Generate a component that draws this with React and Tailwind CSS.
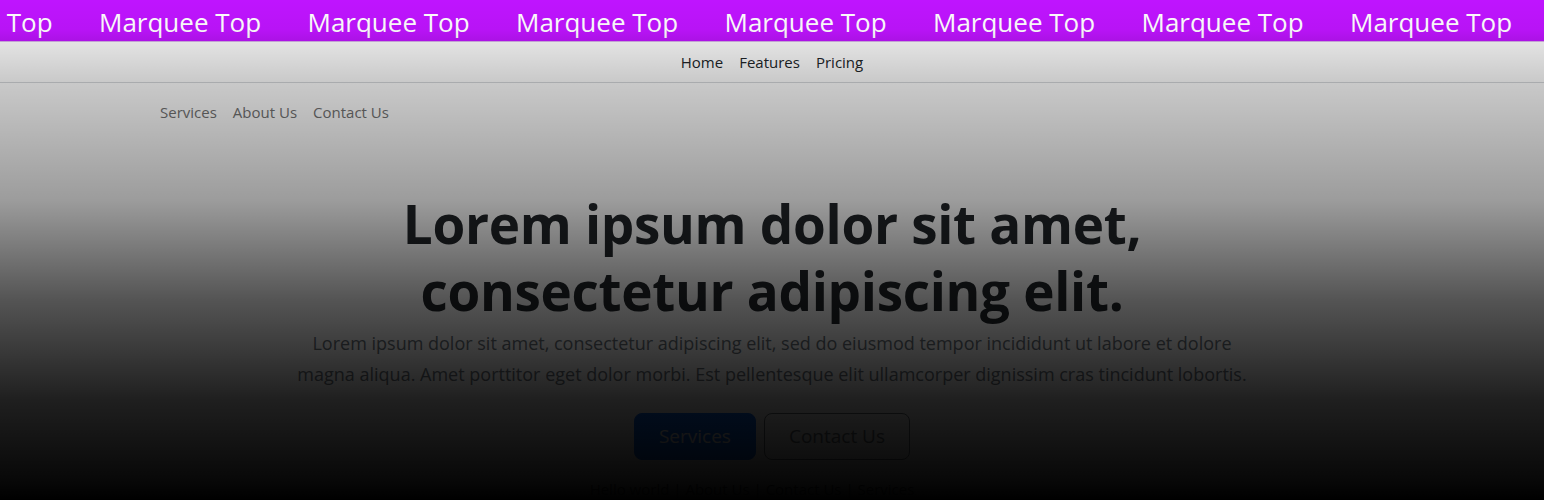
import React from "react";

const items = Array.from({ length: 9 });

export default function App() {
  return (
    <div className="relative h-[500px] overflow-hidden bg-white font-['Open_Sans',sans-serif]">
      {/* marquee */}
      <div className="h-[42px] overflow-hidden whitespace-nowrap bg-[#bf14ff] border-b border-[#d9b3ec]">
        <div className="flex ml-[-109.5px] h-full items-center pt-[3px]">
          {items.map((_, i) => (
            <span key={i} className="shrink-0 w-[208.5px] text-[26px] leading-[38px] text-white">
              Marquee Top
            </span>
          ))}
        </div>
      </div>

      {/* top nav */}
      <nav className="h-[41px] border-b border-[#d6d9dc] bg-white flex items-center justify-center">
        <a className="px-2 text-[15px] leading-6 text-[#212529]">Home</a>
        <a className="px-2 text-[15px] leading-6 text-[#212529]">Features</a>
        <a className="px-2 text-[15px] leading-6 text-[#212529]">Pricing</a>
      </nav>

      {/* sub nav */}
      <div className="pt-[9px] pl-[152px] flex">
        <a className="px-2 py-2 text-[15px] leading-6 text-[#737373]">Services</a>
        <a className="px-2 py-2 text-[15px] leading-6 text-[#737373]">About Us</a>
        <a className="px-2 py-2 text-[15px] leading-6 text-[#737373]">Contact Us</a>
      </div>

      {/* hero */}
      <section className="flex flex-col items-center text-center">
        <h1 className="mt-[58px] text-[53px] leading-[67px] font-bold text-[#212529] tracking-[-0.3px]">
          Lorem ipsum dolor sit amet,
          <br />
          consectetur adipiscing elit.
        </h1>
        <p className="mt-[4px] text-[18px] leading-[31px] text-[#6c757d]">
          Lorem ipsum dolor sit amet, consectetur adipiscing elit, sed do eiusmod tempor incididunt ut labore et dolore
          <br />
          magna aliqua. Amet porttitor eget dolor morbi. Est pellentesque elit ullamcorper dignissim cras tincidunt lobortis.
        </p>
        <div className="mt-[23px] flex gap-2">
          <button className="h-[47px] px-6 rounded-lg bg-[#0d6efd] border border-[#0d6efd] text-white text-[19px]">
            Services
          </button>
          <button className="h-[47px] px-6 rounded-lg border border-[#6c757d] text-[#6c757d] text-[19px]">
            Contact Us
          </button>
        </div>
        <div className="mt-[17px] text-[15px] leading-6 text-[#343a40] ml-[-40px]">
          Hello world | About Us | Contact Us | Services
        </div>
      </section>

      {/* darkening overlay */}
      <div className="pointer-events-none absolute inset-0 bg-[linear-gradient(to_bottom,rgba(0,0,0,0)_0px,rgba(0,0,0,0.04)_30px,rgba(0,0,0,0.11)_42px,rgba(0,0,0,0.21)_82px,rgba(0,0,0,0.39)_200px,rgba(0,0,0,0.67)_300px,rgba(0,0,0,0.88)_400px,rgba(0,0,0,0.97)_480px,rgba(0,0,0,1)_500px)]" />
    </div>
  );
}
